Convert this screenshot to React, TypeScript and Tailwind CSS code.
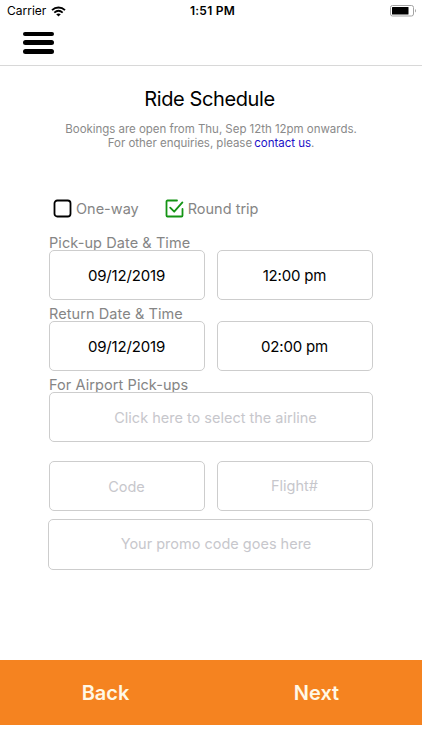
import React, { useState } from "react";
import { clsx } from "clsx";

const StatusBar = () => (
  <div className="grid h-[22px] grid-cols-3 items-center pl-[7px] pr-[5px] text-black">
    <div className="flex items-center gap-[5px]">
      <span className="text-[12px] leading-none">Carrier</span>
      <svg className="h-[11px] w-[15px]" viewBox="0 0 15 11" fill="none" stroke="currentColor">
        <path d="M1 4.1C4.7.7 10.3.7 14 4.1" strokeWidth={1.9} />
        <path d="M3.3 6.6C5.8 4.4 9.2 4.4 11.7 6.6" strokeWidth={1.8} />
        <path d="M5.2 8.3C6.6 7.1 8.4 7.1 9.8 8.3L7.5 10.6Z" fill="currentColor" stroke="none" />
      </svg>
    </div>
    <span className="pl-px text-center text-[12px] font-semibold leading-none tracking-[0.25px]">1:51 PM</span>
    <svg className="h-[12px] w-[27px] justify-self-end" viewBox="0 0 27 12">
      <rect x="0.5" y="0.5" width="23" height="10.5" rx="2" fill="none" stroke="#a3a3a3" />
      <rect x="2" y="2" width="16.5" height="7.5" rx="0.5" fill="#000" />
      <path d="M25 4v3.6c1.3-.6 1.3-3 0-3.6Z" fill="#a3a3a3" />
    </svg>
  </div>
);

const Header = () => (
  <header className="flex h-[44px] items-start border-b border-[#d8d8d8] pl-[23px] pt-[9.5px]">
    <button className="flex flex-col gap-[4.5px]" aria-label="Menu">
      <span className="h-[4.4px] w-[31px] rounded-full bg-black" />
      <span className="h-[4.4px] w-[31px] rounded-full bg-black" />
      <span className="h-[4.4px] w-[31px] rounded-full bg-black" />
    </button>
  </header>
);

interface CheckOptionProps {
  label: string;
  checked: boolean;
  onClick: () => void;
}

const CheckOption = ({ label, checked, onClick }: CheckOptionProps) => (
  <button className="flex items-center gap-[4px]" onClick={onClick}>
    <svg
      className={clsx("h-[19px] w-[19px]", checked ? "text-[#149414]" : "text-black")}
      viewBox="0 0 19 19"
      fill="none"
      stroke="currentColor"
      strokeWidth={1.8}
      strokeLinecap="round"
      strokeLinejoin="round"
    >
      {checked ? (
        <>
          <path d="M12 1.5H2.5A1 1 0 0 0 1.5 2.5v14a1 1 0 0 0 1 1h14a1 1 0 0 0 1-1V10" />
          <path d="M5.2 8.7l4 4 8.2-9.3" />
        </>
      ) : (
        <rect x="1.5" y="1.5" width="16" height="16" rx="2.8" />
      )}
    </svg>
    <span className="text-[14.5px] leading-[18px] text-[#858585]">{label}</span>
  </button>
);

const FieldLabel = ({ children }: { children: React.ReactNode }) => (
  <div className="h-[15px] text-[14.5px] leading-[15px] tracking-[0.08px] text-[#858585]">{children}</div>
);

interface FieldProps {
  value: string;
  placeholder?: boolean;
  className?: string;
}

const Field = ({ value, placeholder, className }: FieldProps) => (
  <div
    className={clsx(
      "flex h-[50px] flex-1 items-center justify-center rounded-[5px] border border-[#cdcdcd] leading-[18px]",
      placeholder ? "text-[14.5px] text-[#c7c7cc]" : "pr-px text-[15px] tracking-[-0.17px] text-black",
      className
    )}
  >
    {value}
  </div>
);

export default function App() {
  const [roundTrip, setRoundTrip] = useState(true);

  return (
    <div className="flex h-[750px] w-[422px] flex-col overflow-hidden bg-white font-['Inter','Liberation_Sans',sans-serif]">
      <StatusBar />
      <Header />

      <main className="flex flex-1 flex-col px-[49px] pt-[21px]">
        <h1 className="pr-[3px] text-center text-[20px] leading-6 tracking-[-0.4px] text-black">Ride Schedule</h1>
        <p className="mt-[11px] text-center text-[11.5px] leading-[14px] tracking-[-0.03px] text-[#8a8a8a]">
          Bookings are open from Thu, Sep 12th 12pm onwards.
          <br />
          For other enquiries, please <a className="-ml-px text-[#1a10c8]">contact us</a>.
        </p>

        <div className="mt-[49px] flex gap-[26px] pl-1">
          <CheckOption label="One-way" checked={!roundTrip} onClick={() => setRoundTrip(false)} />
          <CheckOption label="Round trip" checked={roundTrip} onClick={() => setRoundTrip(true)} />
        </div>

        <div className="mt-[17px]">
          <FieldLabel>Pick-up Date &amp; Time</FieldLabel>
          <div className="flex gap-3">
            <Field value="09/12/2019" className="pt-0.5" />
            <Field value="12:00 pm" className="pt-0.5" />
          </div>
        </div>

        <div className="mt-[6px]">
          <FieldLabel>Return Date &amp; Time</FieldLabel>
          <div className="flex gap-3">
            <Field value="09/12/2019" className="pt-0.5" />
            <Field value="02:00 pm" className="pt-0.5" />
          </div>
        </div>

        <div className="mt-[6px]">
          <FieldLabel>For Airport Pick-ups</FieldLabel>
          <div className="flex">
            <Field value="Click here to select the airline" placeholder className="pl-[9px] pt-0.5" />
          </div>
        </div>

        <div className="mt-[19px] flex gap-3">
          <Field value="Code" placeholder className="pt-0.5 pr-px" />
          <Field value="Flight#" placeholder className="pr-px" />
        </div>
        <div className="-ml-px mt-2 flex">
          <Field value="Your promo code goes here" placeholder className="h-[51px] pb-px pl-[11px]" />
        </div>
      </main>

      <footer className="mb-[25px] grid h-[65px] grid-cols-2 bg-[#f58320] text-[20px] font-semibold text-[#fff8e6]">
        <button>Back</button>
        <button>Next</button>
      </footer>
    </div>
  );
}
